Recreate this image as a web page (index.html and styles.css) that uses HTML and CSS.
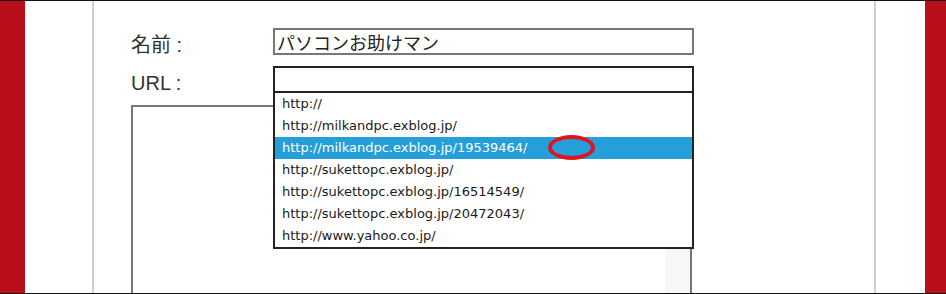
FILE: index.html
```html
<!DOCTYPE html>
<html lang="ja">
<head>
    <meta charset="UTF-8">
    <title>URL入力</title>
    <link rel="stylesheet" href="styles.css">
</head>
<body>

<div class="frame">
    <div class="side-bar left"></div>
    <div class="gutter left"></div>

    <div class="panel">
        <form class="link-form">
            <div class="form-row">
                <label class="field-label" for="site-name">名前 :</label>
                <input class="text-field name-field" id="site-name" type="text" value="パソコンお助けマン">
            </div>

            <div class="form-row">
                <label class="field-label" for="site-url">URL :</label>
                <div class="url-wrap">
                    <input class="text-field url-field" id="site-url" type="text" value="">
                    <ul class="suggest-list">
                        <li>http://</li>
                        <li>http://milkandpc.exblog.jp/</li>
                        <li class="active">http://milkandpc.exblog.jp/19539464/</li>
                        <li>http://sukettopc.exblog.jp/</li>
                        <li>http://sukettopc.exblog.jp/16514549/</li>
                        <li>http://sukettopc.exblog.jp/20472043/</li>
                        <li>http://www.yahoo.co.jp/</li>
                    </ul>
                    <div class="mark-circle"></div>
                </div>
            </div>

            <div class="memo-box">
                <div class="memo-track"></div>
            </div>
        </form>
    </div>

    <div class="gutter right"></div>
    <div class="side-bar right"></div>
</div>

</body>
</html>
```

FILE: styles.css
```css
body {
    margin: 0;
    font-family: 'Liberation Sans', 'Noto Sans CJK JP', sans-serif;
    background-color: #fff;
}

/* Outer frame */
.frame {
    display: flex;
    width: 946px;
    height: 294px;
    box-sizing: border-box;
    border-top: 1px solid #111;
    border-bottom: 1px solid #111;
    overflow: hidden;
}

.side-bar {
    flex-shrink: 0;
    background-color: #b80f1a;
}

.side-bar.left {
    width: 25px;
}

.side-bar.right {
    width: 21px;
}

.gutter {
    flex-shrink: 0;
}

.gutter.left {
    width: 67px;
}

.gutter.right {
    width: 49px;
}

/* Center panel */
.panel {
    flex-shrink: 0;
    width: 784px;
    box-sizing: border-box;
    border-left: 2px solid #cfcfcf;
    border-right: 2px solid #cfcfcf;
    padding: 27px 0 0 37px;
}

.link-form {
    display: flex;
    flex-direction: column;
    width: 563px;
}

.form-row {
    display: flex;
    align-items: flex-start;
    margin-bottom: 9px;
}

.field-label {
    width: 142px;
    margin-top: 5px;
    font-size: 20px;
    line-height: 24px;
    color: #333;
}

.text-field {
    width: 421px;
    height: 27px;
    margin: 0;
    padding: 0 2px;
    box-sizing: border-box;
    border: 2px solid #777;
    font-family: 'Noto Sans CJK JP', sans-serif;
    font-size: 18px;
    color: #222;
    outline: none;
}

.url-wrap {
    position: relative;
    width: 421px;
}

.url-field {
    border-color: #222;
}

/* Autocomplete menu */
.suggest-list {
    position: absolute;
    top: 27px;
    left: 0;
    width: 421px;
    margin: 0;
    padding: 0;
    list-style-type: none;
    box-sizing: border-box;
    border: 2px solid #222;
    border-top: none;
    background-color: #fff;
    z-index: 2;
}

.suggest-list li {
    height: 22px;
    padding-left: 7px;
    font-family: 'DejaVu Sans', sans-serif;
    font-size: 13px;
    line-height: 22px;
    color: #1a1a1a;
}

.suggest-list li.active {
    background-color: #259fd9;
    color: #fff;
}

.mark-circle {
    position: absolute;
    top: 69px;
    left: 275px;
    width: 47px;
    height: 25px;
    box-sizing: border-box;
    border: 4px solid #e0141e;
    border-radius: 50%;
    z-index: 3;
}

/* Memo textarea */
.memo-box {
    position: relative;
    width: 561px;
    height: 220px;
    margin-top: 1px;
    box-sizing: border-box;
    border: 2px solid #777;
    background-color: #fff;
}

.memo-track {
    position: absolute;
    top: 0;
    right: 0;
    bottom: 0;
    width: 25px;
    background-color: #f7f7f7;
}
```
